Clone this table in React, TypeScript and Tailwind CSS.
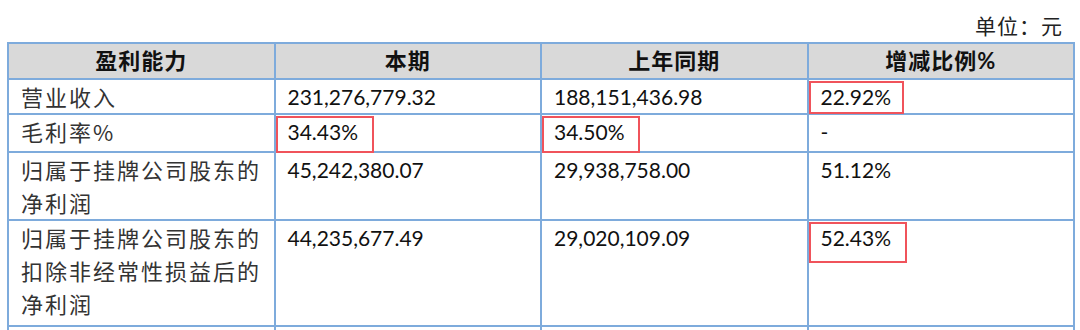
import React from 'react';

const rows = [
  { label: ['营业收入'], cur: '231,276,779.32', prev: '188,151,436.98', rate: '22.92%', h: 'h-[35px]', mark: { rate: 'w-[95px] h-[33px]' } },
  { label: ['毛利率%'], cur: '34.43%', prev: '34.50%', rate: '-', h: 'h-[38px]', mark: { cur: 'w-[98px] h-[37px]', prev: 'w-[98px] h-[37px]' } },
  { label: ['归属于挂牌公司股东的', '净利润'], cur: '45,242,380.07', prev: '29,938,758.00', rate: '51.12%', h: 'h-[68px]', mark: {} },
  { label: ['归属于挂牌公司股东的', '扣除非经常性损益后的', '净利润'], cur: '44,235,677.49', prev: '29,020,109.09', rate: '52.43%', h: 'h-[106px]', mark: { rate: 'w-[98px] h-[41px]' } },
] as const;

function Cell({ text, mark }: { text: string; mark?: string }) {
  return (
    <td className="relative border-2 border-[#7eabdc] align-top pl-[12px] pt-[2px] text-[21px] leading-[30px] text-[#111]">
      {mark && <div className={`absolute left-0 top-[1px] border-2 border-[#f0535b] ${mark}`} />}
      <span className="relative">{text}</span>
    </td>
  );
}

export default function App() {
  return (
    <div className="w-[1080px] h-[330px] overflow-hidden bg-white font-['Lato','Noto_Sans_CJK_SC',sans-serif]">
      <div className="h-[42px] flex items-end justify-end pr-[17px] pb-[1px]">
        <span className="text-[21px] leading-[30px] text-[#222] tracking-[1px]">单位：元</span>
      </div>
      <table className="ml-[7px] w-[1068px] table-fixed border-collapse">
        <thead>
          <tr className="h-[36px] bg-[#d9d9d9]">
            {['盈利能力', '本期', '上年同期', '增减比例%'].map((t) => (
              <th key={t} className="border-2 border-[#7eabdc] text-center text-[22px] font-bold leading-[30px] text-[#111] tracking-[1px]">
                {t}
              </th>
            ))}
          </tr>
        </thead>
        <tbody>
          {rows.map((r, i) => (
            <tr key={i} className={r.h}>
              <td className="border-2 border-[#7eabdc] align-top pl-[12px] pt-0 text-[22px] leading-[33px] tracking-[2px] text-[#333] font-['Noto_Sans_CJK_SC',sans-serif] font-normal">
                {r.label.map((l) => (
                  <div key={l} className="h-[33px]">{l}</div>
                ))}
              </td>
              <Cell text={r.cur} mark={'cur' in r.mark ? r.mark.cur : undefined} />
              <Cell text={r.prev} mark={'prev' in r.mark ? r.mark.prev : undefined} />
              <Cell text={r.rate} mark={'rate' in r.mark ? r.mark.rate : undefined} />
            </tr>
          ))}
          <tr className="h-[30px]">
            <td className="border-2 border-[#7eabdc]" />
            <td className="border-2 border-[#7eabdc]" />
            <td className="border-2 border-[#7eabdc]" />
            <td className="border-2 border-[#7eabdc]" />
          </tr>
        </tbody>
      </table>
    </div>
  );
}
